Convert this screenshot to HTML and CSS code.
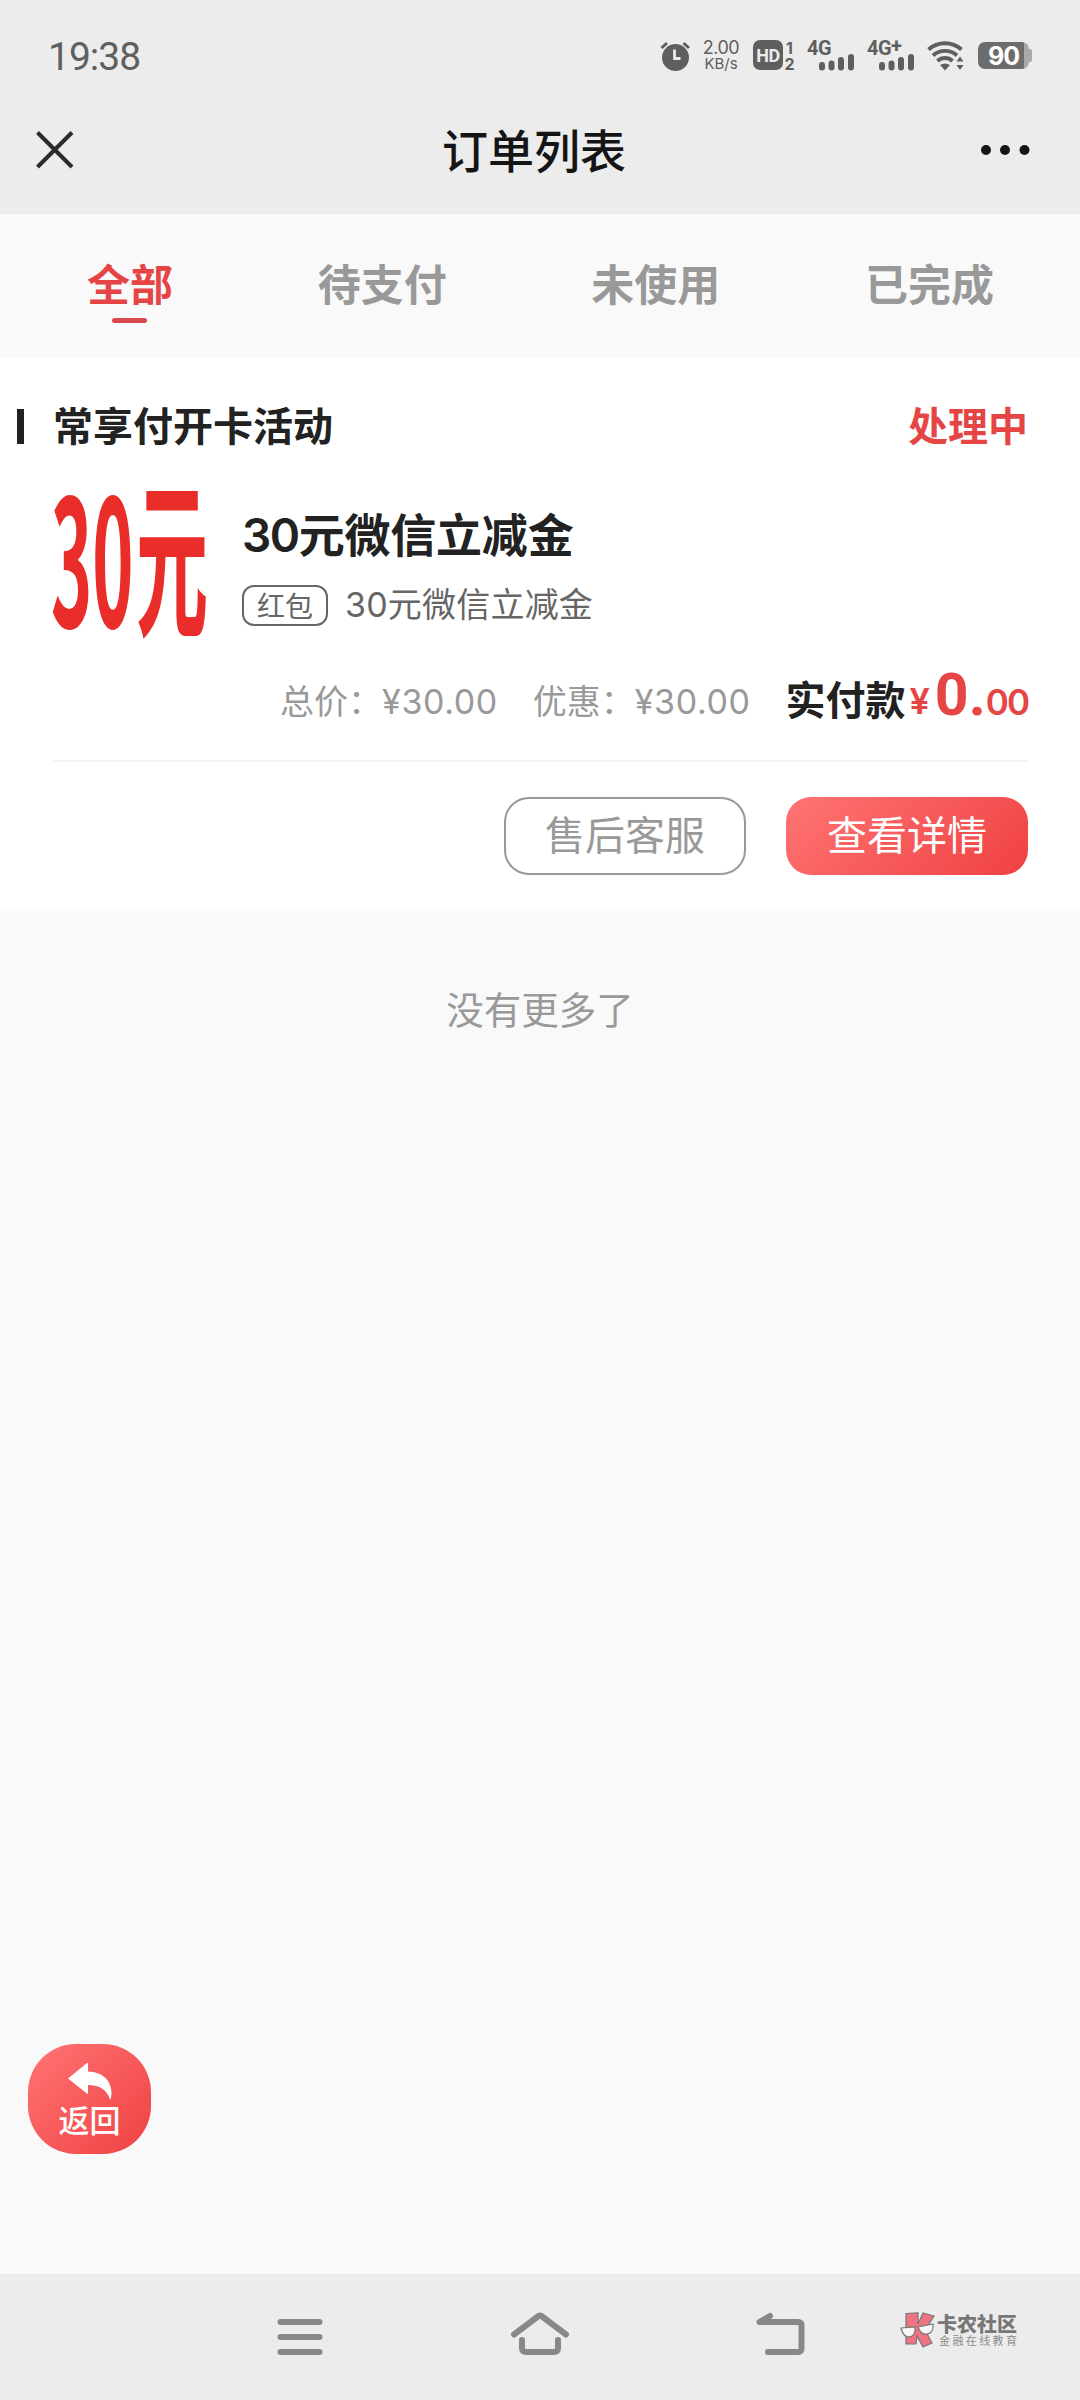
FILE: index.html
```html
<!DOCTYPE html>
<html lang="zh-CN">
<head>
    <meta charset="UTF-8">
    <meta name="viewport" content="width=device-width, initial-scale=1.0">
    <title>订单列表</title>
    <link rel="stylesheet" href="styles.css">
</head>
<body>
    <header class="header">
        <div class="status-bar">
            <span class="time">19:38</span>
            <div class="status-icons">
                <svg class="icon-alarm" width="30" height="30" viewBox="0 0 30 30">
                    <circle cx="15.5" cy="16.5" r="13.5" fill="#5f5f5f"/>
                    <path d="M1.500 7L7 2M23.500 2L29 7" stroke="#5f5f5f" stroke-width="3" fill="none"/>
                    <path d="M14.500 8.500v9h6" stroke="#ececec" stroke-width="2.800" fill="none"/>
                </svg>
                <div class="speed">
                    <span>2.00</span>
                    <span class="unit">KB/s</span>
                </div>
                <div class="hd">
                    <span class="hd-box">HD</span>
                    <div class="hd-sims"><span>1</span><span>2</span></div>
                </div>
                <div class="signal">
                    <span class="net">4G</span>
                    <svg class="bars" width="36" height="18" viewBox="0 0 36 18" stroke="#5f5f5f" stroke-width="6" stroke-linecap="round">
                        <path d="M3 12v2.500M12.500 10.500v4M22 7v7.500M32 4v10.500"/>
                    </svg>
                </div>
                <div class="signal signal-plus">
                    <span class="net">4G<sup>+</sup></span>
                    <svg class="bars" width="36" height="18" viewBox="0 0 36 18" stroke="#5f5f5f" stroke-width="6" stroke-linecap="round">
                        <path d="M3 12v2.500M12.500 10.500v4M22 7v7.500M32 4v10.500"/>
                    </svg>
                </div>
                <svg class="icon-wifi" width="38" height="30" viewBox="0 0 38 30">
                    <g fill="none" stroke="#5f5f5f" stroke-width="3.900">
                        <path d="M1.500 8.500a25 25 0 0 1 33 0"/>
                        <path d="M6 14.500a18 18 0 0 1 24 0"/>
                        <path d="M10.500 20a11 11 0 0 1 15 0"/>
                    </g>
                    <path d="M13 24q5-3 10 0l-5 5.500z" fill="#5f5f5f"/>
                    <path d="M29.500 20.500h7L33 15.500zM29.500 24h7L33 29z" fill="#5f5f5f"/>
                </svg>
                <div class="battery"><span class="battery-level">90</span></div>
            </div>
        </div>
        <div class="title-bar">
            <svg width="38" height="38" viewBox="0 0 38 38">
                <path d="M1.500 1.500L36 36M36 1.500L1.500 36" stroke="#2b2b2b" stroke-width="4" fill="none"/>
            </svg>
            <h1>订单列表</h1>
            <svg width="50" height="12" viewBox="0 0 50 12" fill="#151515">
                <circle cx="6" cy="6" r="5"/>
                <circle cx="25" cy="6" r="5"/>
                <circle cx="44.500" cy="6" r="5"/>
            </svg>
        </div>
    </header>

    <nav class="tabs">
        <a class="tab active">全部</a>
        <a class="tab">待支付</a>
        <a class="tab">未使用</a>
        <a class="tab">已完成</a>
    </nav>

    <main>
        <section class="order">
            <div class="order-header">
                <h2>常享付开卡活动</h2>
                <span class="status">处理中</span>
            </div>
            <div class="order-item">
                <svg class="item-pic" width="156" height="156" viewBox="0 0 156 156">
                    <defs>
                        <linearGradient id="redText" x1="0" y1="0" x2="0" y2="1">
                            <stop offset="0" stop-color="#d42a26"/>
                            <stop offset="0.2" stop-color="#e92d29"/>
                            <stop offset="1" stop-color="#ea2d2a"/>
                        </linearGradient>
                    </defs>
                    <g fill="url(#redText)">
                        <text class="pic-text" transform="translate(-2 138) scale(0.700 1.760)">30</text>
                        <text class="pic-text" transform="translate(83 134) scale(0.720 1.700)">元</text>
                    </g>
                </svg>
                <div class="item-info">
                    <h3><span class="num">30</span>元微信立减金</h3>
                    <p><span class="tag">红包</span><span class="desc">30元微信立减金</span></p>
                </div>
            </div>
            <div class="order-price">
                <span class="price">总价：<i>¥30.00</i></span>
                <span class="price">优惠：<i>¥30.00</i></span>
                <span class="paid">实付款<b class="yen">¥</b><b class="int">0.</b><b class="dec">00</b></span>
            </div>
            <div class="order-actions">
                <button class="btn btn-plain">售后客服</button>
                <button class="btn btn-primary">查看详情</button>
            </div>
        </section>
        <p class="no-more">没有更多了</p>
    </main>

    <a class="back-btn">
        <svg width="44" height="37" viewBox="0 0 44 37">
            <path d="M0 15.500L19 0q1-.5 1 1v7.500C34 9 43.500 17 43.500 30q0 4-1.200 7C39 27 32 22 20 22v8q0 1.500-1.200.5z" fill="#fff"/>
        </svg>
        <span>返回</span>
    </a>

    <footer class="nav-bar">
        <svg width="46" height="44" viewBox="0 0 46 44">
            <path d="M3.500 10h39M3.500 25h39M3.500 40h39"/>
        </svg>
        <svg width="58" height="44" viewBox="0 0 58 44">
            <path d="M3 22.500L27.500 4q1.500-1 3 0L55 22.500M11 28v8q0 4 4 4h28q4 0 4-4v-8"/>
        </svg>
        <svg width="50" height="44" viewBox="0 0 50 44">
            <path d="M14 4L3.500 10H42q3.500 0 3.500 3.500v23q0 3.500-3.500 3.500H12"/>
        </svg>
        <div class="brand">
            <svg width="36" height="37" viewBox="0 0 36 37">
                <path d="M6 1.500L18 1v11l5-11 11 3-9 14 7 13-9 4-6-11-1 8H6z" fill="#ef7382" stroke="#777" stroke-width="1.200"/>
                <path d="M1 16l14-1q1 9-6 10-6 0-8-9zM18 15l15-3q1 9-6 10-6 1-9-7z" fill="#f7f7f7" stroke="#777" stroke-width="1.200"/>
            </svg>
            <div class="brand-text">
                <strong>卡农社区</strong>
                <small>金融在线教育</small>
            </div>
        </div>
    </footer>
</body>
</html>
```

FILE: styles.css
```css
* {
    margin: 0;
    padding: 0;
    box-sizing: border-box;
}

body {
    width: 1080px;
    height: 2400px;
    display: flex;
    flex-direction: column;
    background: #f9f9f9;
    font-family: Inter, 'Noto Sans CJK SC', sans-serif;
    color: #222;
}

svg {
    display: block;
    flex-shrink: 0;
}

/* Header */
.header {
    height: 214px;
    background: #ececec;
}

.status-bar {
    height: 110px;
    padding: 1px 48px 0;
    display: flex;
    justify-content: space-between;
    align-items: center;
    color: #5f5f5f;
}

.time {
    padding-top: 3px;
    font-family: Roboto, sans-serif;
    font-size: 39px;
    letter-spacing: -1px;
    line-height: 46px;
}

.status-icons {
    display: flex;
    height: 30px;
    align-items: center;
}

.speed {
    width: 40px;
    margin-left: 11px;
    font-size: 18px;
    line-height: 16px;
    text-align: center;
    letter-spacing: -0.5px;
}

.speed span {
    display: block;
}

.speed .unit {
    font-size: 15px;
    letter-spacing: 0;
}

.hd {
    display: flex;
    margin-left: 12px;
}

.hd-box {
    width: 30px;
    height: 30px;
    border-radius: 7px;
    background: #5f5f5f;
    color: #ececec;
    font: bold 18px/31px Roboto, sans-serif;
    text-align: center;
    letter-spacing: -0.5px;
}

.hd-sims {
    width: 13px;
    display: flex;
    flex-direction: column;
    font-size: 16px;
    font-weight: 700;
    line-height: 16px;
    text-align: center;
}

.signal {
    width: 48px;
    height: 30px;
    margin-left: 11px;
}

.signal-plus {
    margin-left: 12px;
}

.net {
    display: block;
    height: 12px;
    font: bold 20px/15px Roboto, sans-serif;
    letter-spacing: -0.5px;
    white-space: nowrap;
}

.net sup {
    font-size: 20px;
    line-height: 0;
    vertical-align: 2px;
}

.bars {
    margin-left: 12px;
}

.icon-wifi {
    margin-left: 12px;
}

.battery {
    width: 54px;
    height: 27px;
    margin-left: 13px;
    display: flex;
    align-items: center;
}

.battery-level {
    width: 51px;
    height: 27px;
    border-radius: 7px;
    background: linear-gradient(to right, #6c6c6c 46px, #a9a9a9 46px);
    color: #fff;
    font-size: 25px;
    font-weight: 700;
    line-height: 28px;
    text-align: center;
    letter-spacing: -1px;
}

.battery::after {
    content: '';
    width: 3px;
    height: 13px;
    border-radius: 0 2px 2px 0;
    background: #a9a9a9;
}

.title-bar {
    height: 80px;
    padding: 0 50px 0 36px;
    display: flex;
    justify-content: space-between;
    align-items: center;
}

.title-bar h1 {
    margin-left: 14px;
    padding-top: 2px;
    color: #151515;
    font-size: 46px;
    font-weight: 500;
    line-height: 60px;
}

/* Tabs */
.tabs {
    height: 144px;
    padding: 0 86px 2px 87px;
    display: flex;
    justify-content: space-between;
    align-items: center;
    font-size: 43px;
    font-weight: 700;
    line-height: 60px;
    color: #999;
}

.tab {
    position: relative;
}

.tab.active {
    color: #e64545;
}

.tab.active::after {
    content: '';
    position: absolute;
    left: 25px;
    bottom: -8px;
    width: 35px;
    height: 5px;
    border-radius: 3px;
    background: #d9484c;
}

/* Order card */
.order {
    height: 551px;
    padding: 0 52px 0 53px;
    background: #fff;
}

.order-header {
    height: 132px;
    margin-left: -36px;
    display: flex;
    align-items: center;
    padding-top: 4px;
}

.order-header::before {
    content: '';
    width: 7px;
    height: 35px;
    background: #222;
}

.order-header h2 {
    margin-left: 29px;
    padding-top: 1px;
    font-size: 40px;
    font-weight: 700;
    line-height: 54px;
}

.status {
    margin-left: auto;
    padding-top: 1px;
    color: #e64545;
    font-size: 40px;
    font-weight: 700;
    line-height: 54px;
}

.order-item {
    height: 154px;
    display: flex;
}

.item-pic {
    overflow: visible;
}

.pic-text {
    font-family: 'Noto Sans CJK SC', sans-serif;
    font-size: 100px;
    font-weight: 700;
}

.item-info {
    margin-left: 33px;
    padding-top: 15px;
}

.item-info h3 {
    font-size: 46px;
    font-weight: 700;
    line-height: 60px;
    letter-spacing: -0.2px;
}

.item-info .num {
    font-weight: 600;
    letter-spacing: -1.5px;
}

.item-info p {
    margin-top: 19px;
    display: flex;
    align-items: center;
}

.tag {
    width: 86px;
    height: 41px;
    border: 2px solid #666;
    border-radius: 12px;
    color: #666;
    font-size: 28px;
    line-height: 40px;
    text-align: center;
}

.desc {
    margin-left: 17px;
    color: #666;
    font-size: 34px;
    line-height: 42px;
    letter-spacing: 0.2px;
}

.order-price {
    height: 118px;
    padding-top: 20px;
    display: flex;
    justify-content: flex-end;
    border-bottom: 2px solid #f5f5f5;
    line-height: 76px;
}

.price {
    margin-right: 35px;
    color: #999;
    font-size: 34px;
}

.price i {
    font-style: normal;
    letter-spacing: 0.6px;
}

.paid {
    font-size: 40px;
    font-weight: 700;
    line-height: 73px;
    white-space: nowrap;
}

.paid b {
    color: #e64545;
    font-weight: 600;
    line-height: 0;
}

.paid .yen {
    margin: 0 5px 0 4px;
    font-size: 36px;
    vertical-align: 1px;
}

.paid .int {
    font-family: Roboto, sans-serif;
    font-size: 59px;
    font-weight: 700;
}

.paid .dec {
    font-size: 35px;
    letter-spacing: -2px;
}

.order-actions {
    padding-top: 35px;
    display: flex;
    justify-content: flex-end;
    gap: 40px;
}

.btn {
    width: 242px;
    height: 78px;
    border: 2px solid #999;
    border-radius: 25px;
    background: #fff;
    color: #999;
    font-family: inherit;
    font-size: 40px;
    line-height: 72px;
}

.btn-primary {
    border: none;
    background: linear-gradient(135deg, #ff7474, #f04142);
    color: #fff;
}

.no-more {
    margin-top: 75px;
    color: #999;
    font-size: 37.5px;
    line-height: 54px;
    text-align: center;
}

/* Floating back button */
.back-btn {
    position: absolute;
    left: 28px;
    top: 2044px;
    width: 123px;
    height: 110px;
    padding-top: 19px;
    border-radius: 48px;
    background: linear-gradient(135deg, #ff7474, #f04142);
    color: #fff;
    display: flex;
    flex-direction: column;
    align-items: center;
    font-size: 31px;
    font-weight: 500;
    line-height: 42px;
}

/* System navigation */
.nav-bar {
    height: 126px;
    margin-top: auto;
    padding: 0 62px 6px 277px;
    display: flex;
    align-items: center;
    background: #ececec;
}

.nav-bar > svg {
    margin-right: 187px;
    fill: none;
    stroke: #888;
    stroke-width: 6;
    stroke-linecap: round;
    stroke-linejoin: round;
}

.nav-bar > svg:nth-child(1) {
    margin-right: 188px;
}

.nav-bar > svg:nth-child(3) {
    margin-right: 94px;
}

.brand {
    display: flex;
    margin-top: -8px;
}

.brand-text {
    margin-left: 1px;
    padding-top: 2px;
    color: #777;
    white-space: nowrap;
}

.brand-text strong {
    display: block;
    font-size: 20px;
    line-height: 22px;
    font-weight: 900;
}

.brand-text small {
    display: block;
    margin-left: 2px;
    font-size: 11px;
    line-height: 11px;
    letter-spacing: 2.4px;
    color: #8c8c8c;
}
```
